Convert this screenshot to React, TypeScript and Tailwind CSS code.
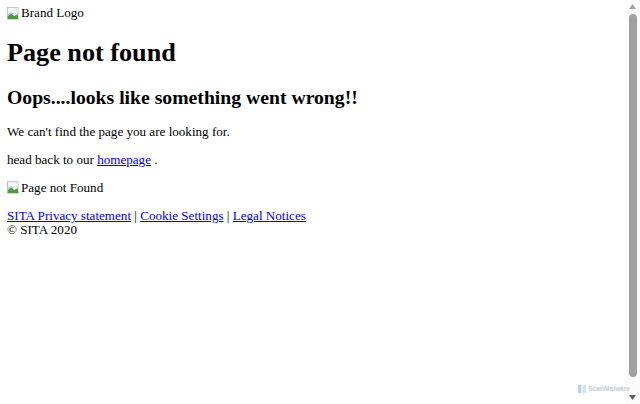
import React from "react";

function BrokenImg() {
  return (
    <svg width="13" height="13" viewBox="0 0 16 16" className="mr-[1px] shrink-0">
      <rect x="0.5" y="0.5" width="13" height="14" fill="#f4f4f4" stroke="#b8b8b8" />
      <path d="M1 15 L1 11 L5 8 L9 11 L13 9 L14 15 Z" fill="#4c9b3a" />
      <path d="M1 10 L5 7 L8 9" fill="none" stroke="#9fc7e8" strokeWidth="1.5" />
      <path d="M9 1 L14 1 L14 6 Z" fill="#dfe9f3" />
    </svg>
  );
}

export default function App() {
  return (
    <div className="relative flex h-[404px] w-[640px] bg-white text-black overflow-hidden" style={{ fontFamily: '"Liberation Serif", "Times New Roman", serif' }}>
      <div className="flex-1 pl-[7px] pt-[6px] text-[13.1px] leading-[14px]">
        <div className="flex h-[14px] items-center">
          <BrokenImg />
          <span>Brand Logo</span>
        </div>
        <h1 className="mt-[18px] mb-[17.6px] text-[26.2px] leading-[30px] font-bold">Page not found</h1>
        <h2 className="mt-0 mb-[16.7px] text-[19.7px] leading-[22.7px] font-bold">Oops....looks like something went wrong!!</h2>
        <p className="my-[14px]">We can't find the page you are looking for.</p>
        <p className="my-[14px]">
          head back to our <a href="#" className="text-[#0000ee] underline">homepage</a> .
        </p>
        <div className="my-[14px] flex h-[14px] items-center">
          <BrokenImg />
          <span>Page not Found</span>
        </div>
        <div>
          <a href="#" className="text-[#0000ee] underline">SITA Privacy statement</a> |{" "}
          <a href="#" className="text-[#0000ee] underline">Cookie Settings</a> |{" "}
          <a href="#" className="text-[#0000ee] underline">Legal Notices</a>
          <br />© SITA 2020
        </div>
      </div>
      <div className="flex w-[15px] flex-col items-center bg-[#fbfbfb]">
        <div className="flex h-[13px] items-center justify-center">
          <svg width="7" height="5" viewBox="0 0 7 5"><path d="M0 5 L3.5 0 L7 5 Z" fill="#a3a3a3" /></svg>
        </div>
        <div className="mt-[1px] mb-[14px] w-[8px] flex-1 rounded-[4px] bg-[#a0a0a0]" />
        <div className="flex h-[13px] items-center justify-center">
          <svg width="7" height="5" viewBox="0 0 7 5"><path d="M0 0 L7 0 L3.5 5 Z" fill="#5f5f5f" /></svg>
        </div>
      </div>
      <div className="absolute right-[10px] bottom-[11px] flex items-center gap-[2px] text-[#c5cdd8]" style={{ fontFamily: '"Liberation Sans", Arial, sans-serif' }}>
        <svg width="8" height="8" viewBox="0 0 8 8">
          <rect x="0" y="0" width="3.5" height="8" fill="#b9d3ef" />
          <rect x="4.5" y="0" width="3.5" height="8" fill="#d5e3f3" />
        </svg>
        <span className="text-[6.6px] leading-[8px] font-bold">ScanMalware</span>
      </div>
    </div>
  );
}
